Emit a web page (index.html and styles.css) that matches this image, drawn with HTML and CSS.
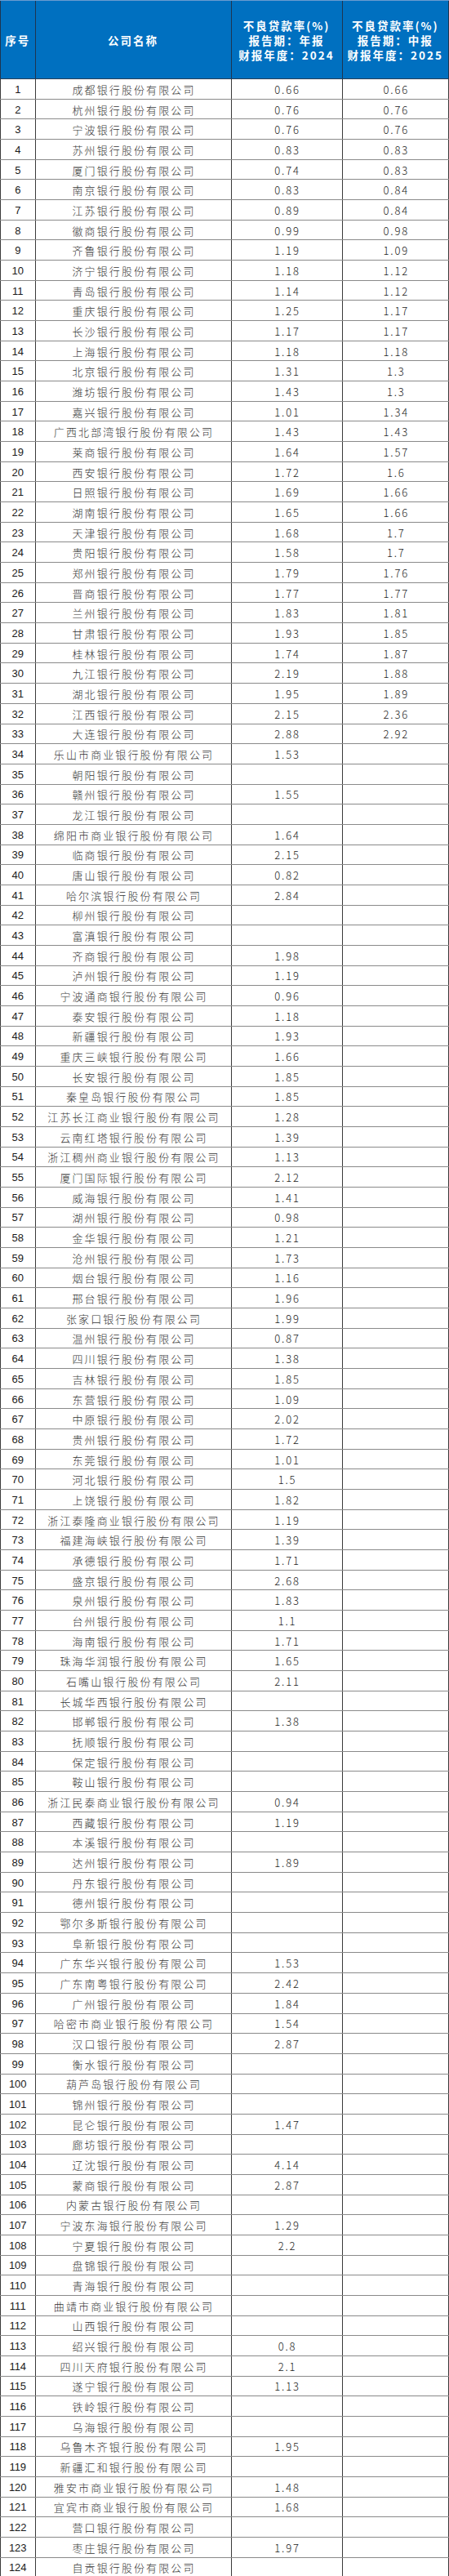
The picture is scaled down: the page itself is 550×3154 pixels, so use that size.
FILE: index.html
```html
<!DOCTYPE html>
<html lang="zh-CN">
<head>
<meta charset="utf-8">
<title>不良贷款率</title>
<link rel="stylesheet" href="styles.css">
</head>
<body>
<div class="sheet">
  <div class="head">
    <div class="h">序号</div>
    <div class="h">公司名称</div>
    <div class="h">不良贷款率(%)<br>报告期：年报<br>财报年度：2024</div>
    <div class="h">不良贷款率(%)<br>报告期：中报<br>财报年度：2025</div>
  </div>
  <div class="row"><div class="i">1</div><div class="n">成都银行股份有限公司</div><div class="v">0.66</div><div class="v">0.66</div></div>
  <div class="row"><div class="i">2</div><div class="n">杭州银行股份有限公司</div><div class="v">0.76</div><div class="v">0.76</div></div>
  <div class="row"><div class="i">3</div><div class="n">宁波银行股份有限公司</div><div class="v">0.76</div><div class="v">0.76</div></div>
  <div class="row"><div class="i">4</div><div class="n">苏州银行股份有限公司</div><div class="v">0.83</div><div class="v">0.83</div></div>
  <div class="row"><div class="i">5</div><div class="n">厦门银行股份有限公司</div><div class="v">0.74</div><div class="v">0.83</div></div>
  <div class="row"><div class="i">6</div><div class="n">南京银行股份有限公司</div><div class="v">0.83</div><div class="v">0.84</div></div>
  <div class="row"><div class="i">7</div><div class="n">江苏银行股份有限公司</div><div class="v">0.89</div><div class="v">0.84</div></div>
  <div class="row"><div class="i">8</div><div class="n">徽商银行股份有限公司</div><div class="v">0.99</div><div class="v">0.98</div></div>
  <div class="row"><div class="i">9</div><div class="n">齐鲁银行股份有限公司</div><div class="v">1.19</div><div class="v">1.09</div></div>
  <div class="row"><div class="i">10</div><div class="n">济宁银行股份有限公司</div><div class="v">1.18</div><div class="v">1.12</div></div>
  <div class="row"><div class="i">11</div><div class="n">青岛银行股份有限公司</div><div class="v">1.14</div><div class="v">1.12</div></div>
  <div class="row"><div class="i">12</div><div class="n">重庆银行股份有限公司</div><div class="v">1.25</div><div class="v">1.17</div></div>
  <div class="row"><div class="i">13</div><div class="n">长沙银行股份有限公司</div><div class="v">1.17</div><div class="v">1.17</div></div>
  <div class="row"><div class="i">14</div><div class="n">上海银行股份有限公司</div><div class="v">1.18</div><div class="v">1.18</div></div>
  <div class="row"><div class="i">15</div><div class="n">北京银行股份有限公司</div><div class="v">1.31</div><div class="v">1.3</div></div>
  <div class="row"><div class="i">16</div><div class="n">潍坊银行股份有限公司</div><div class="v">1.43</div><div class="v">1.3</div></div>
  <div class="row"><div class="i">17</div><div class="n">嘉兴银行股份有限公司</div><div class="v">1.01</div><div class="v">1.34</div></div>
  <div class="row"><div class="i">18</div><div class="n">广西北部湾银行股份有限公司</div><div class="v">1.43</div><div class="v">1.43</div></div>
  <div class="row"><div class="i">19</div><div class="n">莱商银行股份有限公司</div><div class="v">1.64</div><div class="v">1.57</div></div>
  <div class="row"><div class="i">20</div><div class="n">西安银行股份有限公司</div><div class="v">1.72</div><div class="v">1.6</div></div>
  <div class="row"><div class="i">21</div><div class="n">日照银行股份有限公司</div><div class="v">1.69</div><div class="v">1.66</div></div>
  <div class="row"><div class="i">22</div><div class="n">湖南银行股份有限公司</div><div class="v">1.65</div><div class="v">1.66</div></div>
  <div class="row"><div class="i">23</div><div class="n">天津银行股份有限公司</div><div class="v">1.68</div><div class="v">1.7</div></div>
  <div class="row"><div class="i">24</div><div class="n">贵阳银行股份有限公司</div><div class="v">1.58</div><div class="v">1.7</div></div>
  <div class="row"><div class="i">25</div><div class="n">郑州银行股份有限公司</div><div class="v">1.79</div><div class="v">1.76</div></div>
  <div class="row"><div class="i">26</div><div class="n">晋商银行股份有限公司</div><div class="v">1.77</div><div class="v">1.77</div></div>
  <div class="row"><div class="i">27</div><div class="n">兰州银行股份有限公司</div><div class="v">1.83</div><div class="v">1.81</div></div>
  <div class="row"><div class="i">28</div><div class="n">甘肃银行股份有限公司</div><div class="v">1.93</div><div class="v">1.85</div></div>
  <div class="row"><div class="i">29</div><div class="n">桂林银行股份有限公司</div><div class="v">1.74</div><div class="v">1.87</div></div>
  <div class="row"><div class="i">30</div><div class="n">九江银行股份有限公司</div><div class="v">2.19</div><div class="v">1.88</div></div>
  <div class="row"><div class="i">31</div><div class="n">湖北银行股份有限公司</div><div class="v">1.95</div><div class="v">1.89</div></div>
  <div class="row"><div class="i">32</div><div class="n">江西银行股份有限公司</div><div class="v">2.15</div><div class="v">2.36</div></div>
  <div class="row"><div class="i">33</div><div class="n">大连银行股份有限公司</div><div class="v">2.88</div><div class="v">2.92</div></div>
  <div class="row"><div class="i">34</div><div class="n">乐山市商业银行股份有限公司</div><div class="v">1.53</div><div class="v"></div></div>
  <div class="row"><div class="i">35</div><div class="n">朝阳银行股份有限公司</div><div class="v"></div><div class="v"></div></div>
  <div class="row"><div class="i">36</div><div class="n">赣州银行股份有限公司</div><div class="v">1.55</div><div class="v"></div></div>
  <div class="row"><div class="i">37</div><div class="n">龙江银行股份有限公司</div><div class="v"></div><div class="v"></div></div>
  <div class="row"><div class="i">38</div><div class="n">绵阳市商业银行股份有限公司</div><div class="v">1.64</div><div class="v"></div></div>
  <div class="row"><div class="i">39</div><div class="n">临商银行股份有限公司</div><div class="v">2.15</div><div class="v"></div></div>
  <div class="row"><div class="i">40</div><div class="n">唐山银行股份有限公司</div><div class="v">0.82</div><div class="v"></div></div>
  <div class="row"><div class="i">41</div><div class="n">哈尔滨银行股份有限公司</div><div class="v">2.84</div><div class="v"></div></div>
  <div class="row"><div class="i">42</div><div class="n">柳州银行股份有限公司</div><div class="v"></div><div class="v"></div></div>
  <div class="row"><div class="i">43</div><div class="n">富滇银行股份有限公司</div><div class="v"></div><div class="v"></div></div>
  <div class="row"><div class="i">44</div><div class="n">齐商银行股份有限公司</div><div class="v">1.98</div><div class="v"></div></div>
  <div class="row"><div class="i">45</div><div class="n">泸州银行股份有限公司</div><div class="v">1.19</div><div class="v"></div></div>
  <div class="row"><div class="i">46</div><div class="n">宁波通商银行股份有限公司</div><div class="v">0.96</div><div class="v"></div></div>
  <div class="row"><div class="i">47</div><div class="n">泰安银行股份有限公司</div><div class="v">1.18</div><div class="v"></div></div>
  <div class="row"><div class="i">48</div><div class="n">新疆银行股份有限公司</div><div class="v">1.93</div><div class="v"></div></div>
  <div class="row"><div class="i">49</div><div class="n">重庆三峡银行股份有限公司</div><div class="v">1.66</div><div class="v"></div></div>
  <div class="row"><div class="i">50</div><div class="n">长安银行股份有限公司</div><div class="v">1.85</div><div class="v"></div></div>
  <div class="row"><div class="i">51</div><div class="n">秦皇岛银行股份有限公司</div><div class="v">1.85</div><div class="v"></div></div>
  <div class="row"><div class="i">52</div><div class="n">江苏长江商业银行股份有限公司</div><div class="v">1.28</div><div class="v"></div></div>
  <div class="row"><div class="i">53</div><div class="n">云南红塔银行股份有限公司</div><div class="v">1.39</div><div class="v"></div></div>
  <div class="row"><div class="i">54</div><div class="n">浙江稠州商业银行股份有限公司</div><div class="v">1.13</div><div class="v"></div></div>
  <div class="row"><div class="i">55</div><div class="n">厦门国际银行股份有限公司</div><div class="v">2.12</div><div class="v"></div></div>
  <div class="row"><div class="i">56</div><div class="n">威海银行股份有限公司</div><div class="v">1.41</div><div class="v"></div></div>
  <div class="row"><div class="i">57</div><div class="n">湖州银行股份有限公司</div><div class="v">0.98</div><div class="v"></div></div>
  <div class="row"><div class="i">58</div><div class="n">金华银行股份有限公司</div><div class="v">1.21</div><div class="v"></div></div>
  <div class="row"><div class="i">59</div><div class="n">沧州银行股份有限公司</div><div class="v">1.73</div><div class="v"></div></div>
  <div class="row"><div class="i">60</div><div class="n">烟台银行股份有限公司</div><div class="v">1.16</div><div class="v"></div></div>
  <div class="row"><div class="i">61</div><div class="n">邢台银行股份有限公司</div><div class="v">1.96</div><div class="v"></div></div>
  <div class="row"><div class="i">62</div><div class="n">张家口银行股份有限公司</div><div class="v">1.99</div><div class="v"></div></div>
  <div class="row"><div class="i">63</div><div class="n">温州银行股份有限公司</div><div class="v">0.87</div><div class="v"></div></div>
  <div class="row"><div class="i">64</div><div class="n">四川银行股份有限公司</div><div class="v">1.38</div><div class="v"></div></div>
  <div class="row"><div class="i">65</div><div class="n">吉林银行股份有限公司</div><div class="v">1.85</div><div class="v"></div></div>
  <div class="row"><div class="i">66</div><div class="n">东营银行股份有限公司</div><div class="v">1.09</div><div class="v"></div></div>
  <div class="row"><div class="i">67</div><div class="n">中原银行股份有限公司</div><div class="v">2.02</div><div class="v"></div></div>
  <div class="row"><div class="i">68</div><div class="n">贵州银行股份有限公司</div><div class="v">1.72</div><div class="v"></div></div>
  <div class="row"><div class="i">69</div><div class="n">东莞银行股份有限公司</div><div class="v">1.01</div><div class="v"></div></div>
  <div class="row"><div class="i">70</div><div class="n">河北银行股份有限公司</div><div class="v">1.5</div><div class="v"></div></div>
  <div class="row"><div class="i">71</div><div class="n">上饶银行股份有限公司</div><div class="v">1.82</div><div class="v"></div></div>
  <div class="row"><div class="i">72</div><div class="n">浙江泰隆商业银行股份有限公司</div><div class="v">1.19</div><div class="v"></div></div>
  <div class="row"><div class="i">73</div><div class="n">福建海峡银行股份有限公司</div><div class="v">1.39</div><div class="v"></div></div>
  <div class="row"><div class="i">74</div><div class="n">承德银行股份有限公司</div><div class="v">1.71</div><div class="v"></div></div>
  <div class="row"><div class="i">75</div><div class="n">盛京银行股份有限公司</div><div class="v">2.68</div><div class="v"></div></div>
  <div class="row"><div class="i">76</div><div class="n">泉州银行股份有限公司</div><div class="v">1.83</div><div class="v"></div></div>
  <div class="row"><div class="i">77</div><div class="n">台州银行股份有限公司</div><div class="v">1.1</div><div class="v"></div></div>
  <div class="row"><div class="i">78</div><div class="n">海南银行股份有限公司</div><div class="v">1.71</div><div class="v"></div></div>
  <div class="row"><div class="i">79</div><div class="n">珠海华润银行股份有限公司</div><div class="v">1.65</div><div class="v"></div></div>
  <div class="row"><div class="i">80</div><div class="n">石嘴山银行股份有限公司</div><div class="v">2.11</div><div class="v"></div></div>
  <div class="row"><div class="i">81</div><div class="n">长城华西银行股份有限公司</div><div class="v"></div><div class="v"></div></div>
  <div class="row"><div class="i">82</div><div class="n">邯郸银行股份有限公司</div><div class="v">1.38</div><div class="v"></div></div>
  <div class="row"><div class="i">83</div><div class="n">抚顺银行股份有限公司</div><div class="v"></div><div class="v"></div></div>
  <div class="row"><div class="i">84</div><div class="n">保定银行股份有限公司</div><div class="v"></div><div class="v"></div></div>
  <div class="row"><div class="i">85</div><div class="n">鞍山银行股份有限公司</div><div class="v"></div><div class="v"></div></div>
  <div class="row"><div class="i">86</div><div class="n">浙江民泰商业银行股份有限公司</div><div class="v">0.94</div><div class="v"></div></div>
  <div class="row"><div class="i">87</div><div class="n">西藏银行股份有限公司</div><div class="v">1.19</div><div class="v"></div></div>
  <div class="row"><div class="i">88</div><div class="n">本溪银行股份有限公司</div><div class="v"></div><div class="v"></div></div>
  <div class="row"><div class="i">89</div><div class="n">达州银行股份有限公司</div><div class="v">1.89</div><div class="v"></div></div>
  <div class="row"><div class="i">90</div><div class="n">丹东银行股份有限公司</div><div class="v"></div><div class="v"></div></div>
  <div class="row"><div class="i">91</div><div class="n">德州银行股份有限公司</div><div class="v"></div><div class="v"></div></div>
  <div class="row"><div class="i">92</div><div class="n">鄂尔多斯银行股份有限公司</div><div class="v"></div><div class="v"></div></div>
  <div class="row"><div class="i">93</div><div class="n">阜新银行股份有限公司</div><div class="v"></div><div class="v"></div></div>
  <div class="row"><div class="i">94</div><div class="n">广东华兴银行股份有限公司</div><div class="v">1.53</div><div class="v"></div></div>
  <div class="row"><div class="i">95</div><div class="n">广东南粤银行股份有限公司</div><div class="v">2.42</div><div class="v"></div></div>
  <div class="row"><div class="i">96</div><div class="n">广州银行股份有限公司</div><div class="v">1.84</div><div class="v"></div></div>
  <div class="row"><div class="i">97</div><div class="n">哈密市商业银行股份有限公司</div><div class="v">1.54</div><div class="v"></div></div>
  <div class="row"><div class="i">98</div><div class="n">汉口银行股份有限公司</div><div class="v">2.87</div><div class="v"></div></div>
  <div class="row"><div class="i">99</div><div class="n">衡水银行股份有限公司</div><div class="v"></div><div class="v"></div></div>
  <div class="row"><div class="i">100</div><div class="n">葫芦岛银行股份有限公司</div><div class="v"></div><div class="v"></div></div>
  <div class="row"><div class="i">101</div><div class="n">锦州银行股份有限公司</div><div class="v"></div><div class="v"></div></div>
  <div class="row"><div class="i">102</div><div class="n">昆仑银行股份有限公司</div><div class="v">1.47</div><div class="v"></div></div>
  <div class="row"><div class="i">103</div><div class="n">廊坊银行股份有限公司</div><div class="v"></div><div class="v"></div></div>
  <div class="row"><div class="i">104</div><div class="n">辽沈银行股份有限公司</div><div class="v">4.14</div><div class="v"></div></div>
  <div class="row"><div class="i">105</div><div class="n">蒙商银行股份有限公司</div><div class="v">2.87</div><div class="v"></div></div>
  <div class="row"><div class="i">106</div><div class="n">内蒙古银行股份有限公司</div><div class="v"></div><div class="v"></div></div>
  <div class="row"><div class="i">107</div><div class="n">宁波东海银行股份有限公司</div><div class="v">1.29</div><div class="v"></div></div>
  <div class="row"><div class="i">108</div><div class="n">宁夏银行股份有限公司</div><div class="v">2.2</div><div class="v"></div></div>
  <div class="row"><div class="i">109</div><div class="n">盘锦银行股份有限公司</div><div class="v"></div><div class="v"></div></div>
  <div class="row"><div class="i">110</div><div class="n">青海银行股份有限公司</div><div class="v"></div><div class="v"></div></div>
  <div class="row"><div class="i">111</div><div class="n">曲靖市商业银行股份有限公司</div><div class="v"></div><div class="v"></div></div>
  <div class="row"><div class="i">112</div><div class="n">山西银行股份有限公司</div><div class="v"></div><div class="v"></div></div>
  <div class="row"><div class="i">113</div><div class="n">绍兴银行股份有限公司</div><div class="v">0.8</div><div class="v"></div></div>
  <div class="row"><div class="i">114</div><div class="n">四川天府银行股份有限公司</div><div class="v">2.1</div><div class="v"></div></div>
  <div class="row"><div class="i">115</div><div class="n">遂宁银行股份有限公司</div><div class="v">1.13</div><div class="v"></div></div>
  <div class="row"><div class="i">116</div><div class="n">铁岭银行股份有限公司</div><div class="v"></div><div class="v"></div></div>
  <div class="row"><div class="i">117</div><div class="n">乌海银行股份有限公司</div><div class="v"></div><div class="v"></div></div>
  <div class="row"><div class="i">118</div><div class="n">乌鲁木齐银行股份有限公司</div><div class="v">1.95</div><div class="v"></div></div>
  <div class="row"><div class="i">119</div><div class="n">新疆汇和银行股份有限公司</div><div class="v"></div><div class="v"></div></div>
  <div class="row"><div class="i">120</div><div class="n">雅安市商业银行股份有限公司</div><div class="v">1.48</div><div class="v"></div></div>
  <div class="row"><div class="i">121</div><div class="n">宜宾市商业银行股份有限公司</div><div class="v">1.68</div><div class="v"></div></div>
  <div class="row"><div class="i">122</div><div class="n">营口银行股份有限公司</div><div class="v"></div><div class="v"></div></div>
  <div class="row"><div class="i">123</div><div class="n">枣庄银行股份有限公司</div><div class="v">1.97</div><div class="v"></div></div>
  <div class="row"><div class="i">124</div><div class="n">自贡银行股份有限公司</div><div class="v"></div><div class="v"></div></div>
</div>
</body>
</html>
```

FILE: styles.css
```css
html, body {
  margin: 0;
  padding: 0;
  background: #ffffff;
}

.sheet {
  width: 550px;
  font-family: "Noto Sans CJK SC", sans-serif;
  color: #2b2b2b;
}

.head {
  display: grid;
  grid-template-columns: 43.5px 240px 136px 130.5px;
  height: 97px;
  box-sizing: border-box;
  background: #0070c0;
  border-top: 1px solid #6a9bd0;
  border-bottom: 1px solid #2a3f55;
}

.head .h {
  display: flex;
  align-items: center;
  justify-content: center;
  text-align: center;
  color: #ffffff;
  font-weight: 700;
  font-size: 13.5px;
  line-height: 18px;
  letter-spacing: 2px;
  border-right: 1px solid #1e3550;
}

.head .h:first-child {
  border-left: 1px solid #1e3550;
}

.row {
  display: grid;
  grid-template-columns: 43.5px 240px 136px 130.5px;
  height: 24.685px;
  box-sizing: border-box;
  border-bottom: 1px solid #8a8a8a;
}

.row > div {
  display: flex;
  align-items: center;
  justify-content: center;
  padding-top: 1px;
  border-right: 1px solid #3a3a3a;
  white-space: nowrap;
}

.row > div:first-child {
  border-left: 1px solid #3a3a3a;
}

.i {
  font-family: "Liberation Sans", Arial, sans-serif;
  font-size: 13px;
  color: #1a1a1a;
}

.n {
  font-size: 13px;
  font-weight: 300;
  color: #333333;
  letter-spacing: 2.1px;
  padding-left: 2px;
}

.v {
  font-size: 13px;
  font-weight: 300;
  color: #222222;
  letter-spacing: 1.8px;
  padding-left: 2px;
}
```
